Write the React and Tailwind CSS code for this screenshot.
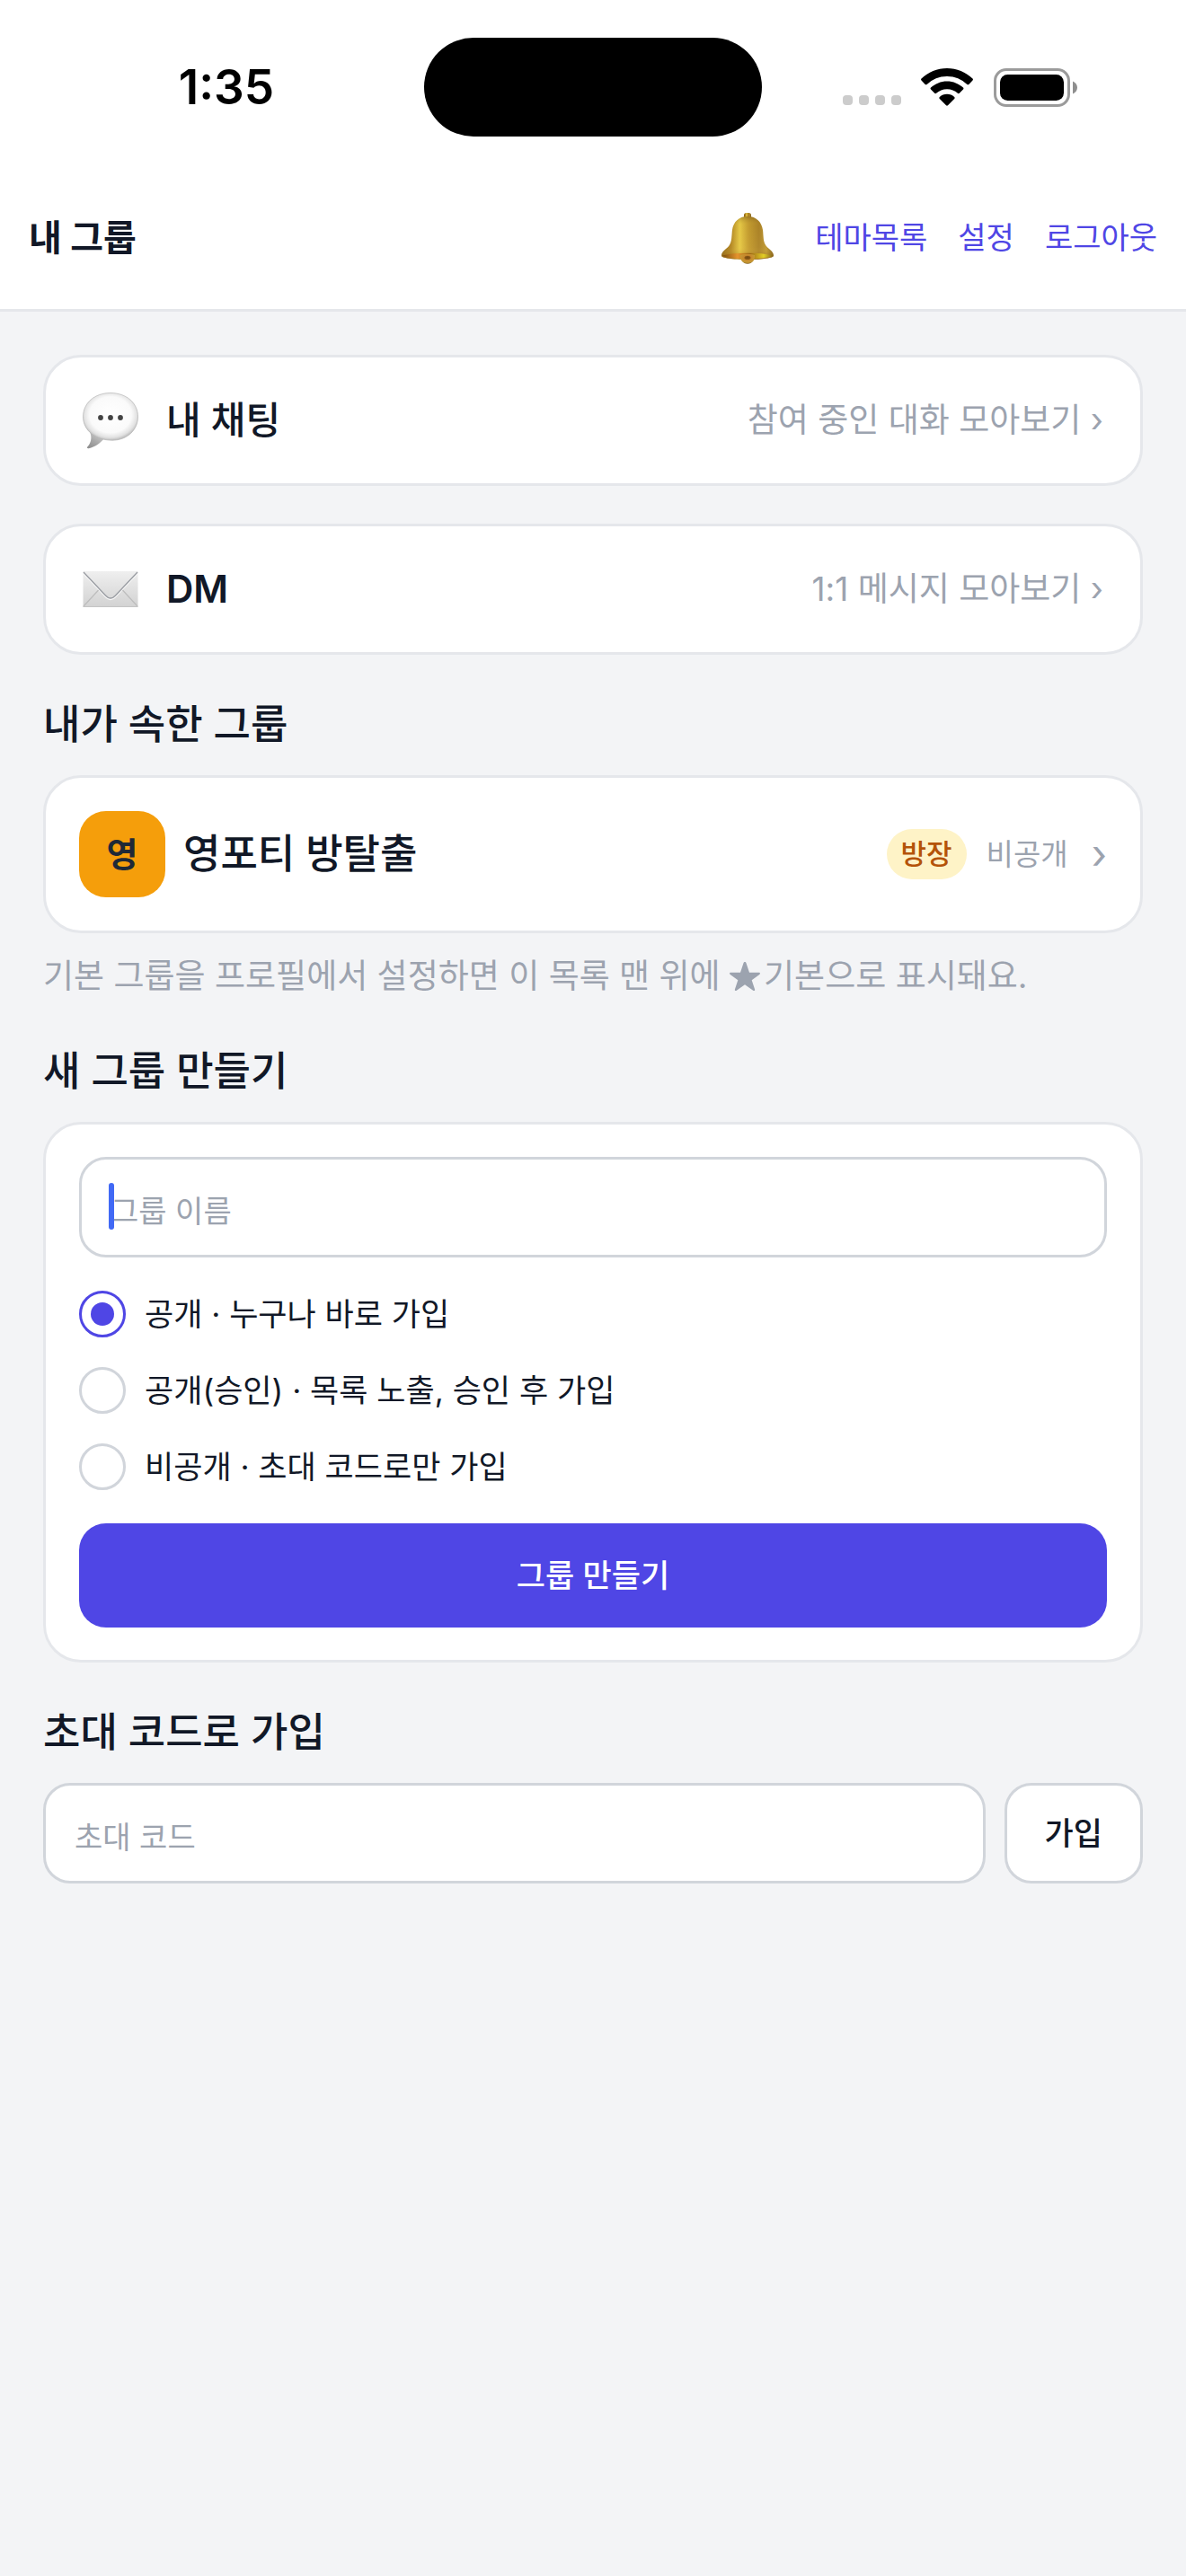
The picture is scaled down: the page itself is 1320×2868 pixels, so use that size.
import React, { useState } from "react";

const GROUP_TYPES = [
  { id: "public", label: "공개 · 누구나 바로 가입" },
  { id: "approval", label: "공개(승인) · 목록 노출, 승인 후 가입" },
  { id: "private", label: "비공개 · 초대 코드로만 가입" },
];

function WifiIcon() {
  return (
    <svg viewBox="0 0 58 42" className="h-[42px] w-[58px]" aria-hidden="true">
      <path d="M29 0C39.800 0 50 4.300 57.500 11.600c.6.600.6 1.400 0 2l-4.200 4.300c-.5.500-1.300.500-1.900 0A32 32 0 0 0 29 8.900 32 32 0 0 0 6.600 17.900c-.6.500-1.400.500-1.900 0L.5 13.600c-.6-.6-.6-1.400 0-2C8 4.300 18.200 0 29 0z" />
      <path d="M29 14.500c6.900 0 13.200 2.700 18 7.100.6.500.6 1.400 0 2l-4.200 4.200c-.5.500-1.300.5-1.900 0A17.600 17.600 0 0 0 29 23.200c-4.600 0-8.800 1.800-11.900 4.600-.6.500-1.400.5-1.900 0L11 23.600c-.6-.6-.6-1.500 0-2 4.800-4.400 11.100-7.100 18-7.100z" />
      <path d="M29 28.800c3.100 0 6 1.200 8.200 3.100.6.500.6 1.400 0 2l-7.200 7.400c-.6.600-1.400.6-2 0l-7.200-7.400c-.6-.6-.6-1.500 0-2 2.200-1.900 5.100-3.100 8.200-3.100z" />
    </svg>
  );
}

function BatteryIcon() {
  return (
    <svg viewBox="0 0 93 43" className="h-[43px] w-[93px]" aria-hidden="true">
      <rect x="1.500" y="1.500" width="82" height="40" rx="12.500" fill="none" stroke="#9b9b9b" strokeWidth="3" />
      <rect x="7" y="7" width="71" height="29" rx="8.500" />
      <path d="M88 14.500c3 1.200 5 3.900 5 7s-2 5.800-5 7z" fill="#8e8e8e" />
    </svg>
  );
}

function BellIcon() {
  return (
    <svg viewBox="0 0 58 57" className="h-[57px] w-[58px]" aria-hidden="true">
      <defs>
        <linearGradient id="bellBody" x1="0" x2="1" y1="0" y2="0">
          <stop offset="0" stopColor="#80570f" />
          <stop offset="0.180" stopColor="#a97b1c" />
          <stop offset="0.350" stopColor="#e3c644" />
          <stop offset="0.520" stopColor="#bd942b" />
          <stop offset="0.720" stopColor="#a27822" />
          <stop offset="0.860" stopColor="#b8912f" />
          <stop offset="1" stopColor="#6f4f12" />
        </linearGradient>
        <linearGradient id="bellShade" x1="0" x2="0" y1="0" y2="1">
          <stop offset="0" stopColor="#6b4a10" stopOpacity="0.400" />
          <stop offset="0.200" stopColor="#f2d653" stopOpacity="0.100" />
          <stop offset="0.720" stopColor="#ffe066" stopOpacity="0.150" />
          <stop offset="1" stopColor="#8a5708" stopOpacity="0.600" />
        </linearGradient>
        <linearGradient id="bellRim" x1="0" x2="1" y1="0" y2="0">
          <stop offset="0" stopColor="#7a4d0c" />
          <stop offset="0.300" stopColor="#e5942d" />
          <stop offset="0.550" stopColor="#9c6714" />
          <stop offset="0.820" stopColor="#e3cf25" />
          <stop offset="1" stopColor="#85691a" />
        </linearGradient>
        <radialGradient id="bellClapper" cx="0.500" cy="0.350" r="0.650">
          <stop offset="0" stopColor="#7a4d12" />
          <stop offset="0.350" stopColor="#c8862b" />
          <stop offset="0.800" stopColor="#c59a35" />
          <stop offset="1" stopColor="#7a5718" />
        </radialGradient>
      </defs>
      <rect x="25" y="0" width="8" height="7" rx="2.500" fill="url(#bellBody)" />
      <path d="M29 4c10.500 0 16.500 7 17.200 17 .5 7.500.6 11.700 3.300 15.500 3 4.200 8.500 6.200 8.500 11.200C58 50 46 52 29 52S0 50 0 47.700c0-5 5.500-7 8.500-11.200 2.700-3.800 2.800-8 3.300-15.500C12.500 11 18.500 4 29 4z" fill="url(#bellBody)" />
      <path d="M29 4c10.500 0 16.500 7 17.200 17 .5 7.500.6 11.700 3.300 15.500 3 4.200 8.500 6.200 8.500 11.200C58 50 46 52 29 52S0 50 0 47.700c0-5 5.500-7 8.500-11.200 2.700-3.800 2.800-8 3.300-15.500C12.500 11 18.500 4 29 4z" fill="url(#bellShade)" />
      <path d="M1 47.500C9 45.500 18 44.800 29 44.800s20 .7 28 2.700c-4 2.500-15 3.700-28 3.700S5 50 1 47.500z" fill="url(#bellRim)" />
      <path d="M21 47c1.500-1.500 14.500-1.500 16 0 .6 5.500-3 9.700-8 9.700s-8.600-4.200-8-9.700z" fill="url(#bellClapper)" />
      <ellipse cx="29" cy="50" rx="3.500" ry="2" fill="#74480f" opacity="0.700" />
    </svg>
  );
}

function ChatIcon() {
  return (
    <svg viewBox="0 0 62 63" className="h-[63px] w-[62px]" aria-hidden="true">
      <defs>
        <radialGradient id="bubbleFill" cx="0.500" cy="0.460" r="0.560">
          <stop offset="0" stopColor="#ffffff" />
          <stop offset="0.680" stopColor="#fafafa" />
          <stop offset="0.860" stopColor="#e2e2e2" />
          <stop offset="1" stopColor="#b0b0b0" />
        </radialGradient>
        <linearGradient id="bubbleTail" x1="0" x2="0.600" y1="1" y2="0">
          <stop offset="0" stopColor="#8a8a8a" />
          <stop offset="0.500" stopColor="#a9a9a9" />
          <stop offset="1" stopColor="#d2d2d2" />
        </linearGradient>
      </defs>
      <path d="M8 44c2 4 2.500 11-2.700 16.500-.9 1 .1 2.100 1.500 1.700C14 60.500 19 57 24 51l-4-9z" fill="url(#bubbleTail)" />
      <path d="M31 .5C49 .5 61.500 12 61.500 27S49 53.200 33 53.200C14 53.200.5 42 .5 27S13 .5 31 .5z" fill="url(#bubbleFill)" stroke="#b5b5b5" strokeWidth="0.700" />
      <circle cx="20" cy="28" r="2.900" fill="#444" />
      <circle cx="31" cy="28" r="2.900" fill="#444" />
      <circle cx="42" cy="28" r="2.900" fill="#444" />
    </svg>
  );
}

function MailIcon() {
  return (
    <svg viewBox="0 0 62 63" className="h-[63px] w-[62px]" aria-hidden="true">
      <defs>
        <linearGradient id="mailFill" x1="0" x2="0" y1="0" y2="1">
          <stop offset="0" stopColor="#efefef" />
          <stop offset="1" stopColor="#d2d2d2" />
        </linearGradient>
      </defs>
      <rect x="0.500" y="11" width="61" height="40" rx="1" fill="url(#mailFill)" />
      <path d="M1 50 18.500 31M61 50 43.500 31" stroke="#bdbdbd" strokeWidth="1.200" fill="none" />
      <path d="M1 13.500 25.500 39.500c3.500 4 7.500 4 11 0L61 13.500" stroke="#f7f7f7" strokeWidth="1.500" fill="none" />
      <path d="M1 12 25.500 38c3.500 4 7.500 4 11 0L61 12" stroke="#9a9da3" strokeWidth="1.300" fill="none" />
      <path d="M.5 50.500h61" stroke="#c4c4c4" strokeWidth="1" />
    </svg>
  );
}

function StatusBar() {
  return (
    <div className="grid grid-cols-[1fr_376px_1fr] items-center justify-items-center px-8 pt-[42px] pb-[34px] text-black">
      <time className="text-[53px] leading-[60px] font-semibold">1:35</time>
      <div className="h-[110px] w-full rounded-full bg-black" />
      <div className="flex items-center">
        <div className="mb-0.5 flex gap-[7px] self-end">
          {[0, 1, 2, 3].map((i) => (
            <span key={i} className="size-[11px] rounded-[4px] bg-[#cccccc]" />
          ))}
        </div>
        <div className="ml-[22px]"><WifiIcon /></div>
        <div className="ml-[23px]"><BatteryIcon /></div>
      </div>
    </div>
  );
}

function MenuCard({ icon, title, hint }) {
  return (
    <a href="#" className="flex items-center rounded-[42px] border-[3px] border-[#e5e7eb] bg-white px-[41px] py-[38px]">
      {icon}
      <span className="ml-[31px] text-[42px] leading-[64px] font-medium text-[#111827]">{title}</span>
      <span className="ml-auto text-[37px] leading-[64px] text-[#9ca3af]">{hint} ›</span>
    </a>
  );
}

function SectionTitle({ children }) {
  return <h2 className="text-[45px] leading-[60px] font-medium text-[#111827]">{children}</h2>;
}

export default function App() {
  const [type, setType] = useState("public");
  return (
    <div className="min-h-screen bg-[#f3f4f6] font-['Inter','Noto_Sans_CJK_KR',sans-serif]">
      <header className="border-b-[3px] border-[#e5e7eb] bg-white">
        <StatusBar />
        <div className="flex h-[158px] items-center px-8">
          <h1 className="text-[40px] leading-[56px] font-bold text-[#111827]">내 그룹</h1>
          <nav className="ml-auto flex items-center gap-[34px] text-[34px] leading-[56px] text-[#4f46e5]">
            <button type="button" aria-label="알림" className="mr-3"><BellIcon /></button>
            <a href="#">테마목록</a>
            <a href="#">설정</a>
            <a href="#">로그아웃</a>
          </nav>
        </div>
      </header>

      <main className="px-12 pt-12">
        <div className="flex flex-col gap-[42px]">
          <MenuCard icon={<ChatIcon />} title="내 채팅" hint="참여 중인 대화 모아보기" />
          <MenuCard icon={<MailIcon />} title={<span className="font-semibold">DM</span>} hint="1:1 메시지 모아보기" />
        </div>

        <section className="mt-12">
          <SectionTitle>내가 속한 그룹</SectionTitle>
          <a href="#" className="mt-[26px] flex items-center rounded-[42px] border-[3px] border-[#e5e7eb] bg-white px-[37px] py-[37px]">
            <span className="flex size-24 items-center justify-center rounded-[30px] bg-[#f59e0b] text-[38px] font-bold text-[#1f2937]">영</span>
            <span className="ml-5 text-[45px] leading-[60px] font-medium text-[#111827]">영포티 방탈출</span>
            <span className="ml-auto rounded-full bg-[#fef3c7] px-4 text-[31px] leading-[56px] font-medium text-[#b45309]">방장</span>
            <span className="ml-[22px] text-[33px] leading-[56px] text-[#9ca3af]">비공개</span>
            <span className="ml-[26px] text-[45px] leading-[56px] text-[#9ca3af]">›</span>
          </a>
          <p className="mt-[22px] text-[37px] leading-[52px] text-[#9ca3af]">
            기본 그룹을 프로필에서 설정하면 이 목록 맨 위에{" "}
            <svg viewBox="0 0 34 32" className="mr-1 mb-1.5 inline h-8 w-[34px] fill-current" role="img" aria-label="★">
              <path d="M17 0c.8 0 1.200.4 1.500 1.200l3.500 10.500h10.500c1.600 0 2 1.400.8 2.300l-8.600 6.300 3.400 10.200c.4 1.400-.8 2-1.900 1.200L17 25.300l-9.200 6.400c-1.100.8-2.300.2-1.900-1.200l3.400-10.200L.7 14c-1.200-.9-.8-2.300.8-2.300H12l3.500-10.500C15.800.4 16.200 0 17 0z" />
            </svg>
            기본으로 표시돼요.
          </p>
        </section>

        <section className="mt-[50px]">
          <SectionTitle>새 그룹 만들기</SectionTitle>
          <form className="mt-[26px] rounded-[42px] border-[3px] border-[#e5e7eb] bg-white px-[37px] py-9" onSubmit={(e) => e.preventDefault()}>
            <div className="relative">
              <input
                type="text"
                aria-label="그룹 이름"
                placeholder="그룹 이름"
                className="block h-28 w-full rounded-[30px] border-[3px] border-[#d1d5db] bg-white px-8 pt-2 text-[34px] text-[#111827] outline-none placeholder:text-[#9ca3af]"
              />
              <span className="absolute top-[29px] left-[33px] h-[52px] w-[6px] rounded-full bg-[#4169f5]" />
            </div>
            <div role="radiogroup" aria-label="공개 설정" className="mt-[37px] flex flex-col gap-[33px]">
              {GROUP_TYPES.map((t) => (
                <label key={t.id} className="flex items-center gap-[21px] text-[35px] leading-[52px] text-[#111827]">
                  <input
                    type="radio"
                    name="type"
                    checked={type === t.id}
                    onChange={() => setType(t.id)}
                    className="grid size-[52px] shrink-0 appearance-none place-content-center rounded-full border-[3px] border-[#d1d5db] bg-white checked:border-[#4f46e5] checked:before:size-[26px] checked:before:rounded-full checked:before:bg-[#4f46e5] checked:before:content-['']"
                  />
                  {t.label}
                </label>
              ))}
            </div>
            <button type="submit" className="mt-[37px] block h-[116px] w-full rounded-[30px] bg-[#4f46e5] text-[35px] font-medium text-white">
              그룹 만들기
            </button>
          </form>
        </section>

        <section className="mt-12">
          <SectionTitle>초대 코드로 가입</SectionTitle>
          <form className="mt-[26px] flex gap-[21px]" onSubmit={(e) => e.preventDefault()}>
            <input
              type="text"
              aria-label="초대 코드"
              placeholder="초대 코드"
              className="h-28 min-w-0 flex-1 rounded-[30px] border-[3px] border-[#d1d5db] bg-white px-8 pt-2 text-[34px] text-[#111827] outline-none placeholder:text-[#9ca3af]"
            />
            <button type="submit" className="h-28 rounded-[30px] border-[3px] border-[#d1d5db] bg-white px-[42px] text-[35px] font-medium text-[#111827]">
              가입
            </button>
          </form>
        </section>
      </main>
    </div>
  );
}
